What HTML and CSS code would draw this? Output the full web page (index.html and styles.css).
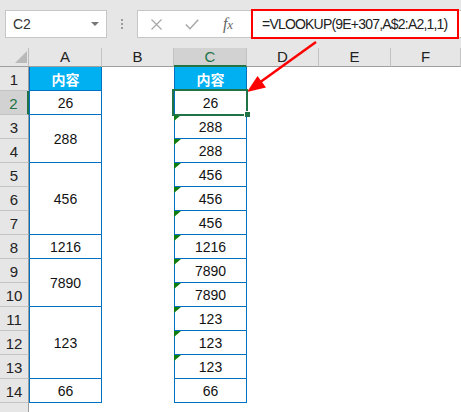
FILE: index.html
```html
<!DOCTYPE html>
<html lang="zh-CN">
<head>
    <title>VLOOKUP</title>
    <meta charset="utf-8"/>
    <link rel="stylesheet" href="styles.css">
</head>
<body>
    <div class="formula-bar">
        <div class="name-box"><span>C2</span><i class="caret"></i></div>
        <div class="grip"><i></i><i></i><i></i></div>
        <div class="formula-box">
            <span class="fb-btn">
                <svg width="11" height="11" viewBox="0 0 11 11"><path d="M0.5 0.5L10.5 10.5M10.5 0.5L0.5 10.5" stroke="#a6a6a6" stroke-width="1.2" fill="none"/></svg>
            </span>
            <span class="fb-btn">
                <svg width="14" height="11" viewBox="0 0 14 11"><path d="M0.8 5.5L5 9.8L13.2 0.8" stroke="#a6a6a6" stroke-width="1.4" fill="none"/></svg>
            </span>
            <span class="fb-btn fx">f<span>x</span></span>
            <div class="formula">=VLOOKUP(9E+307,A$2:A2,1,1)</div>
        </div>
    </div>

    <div class="sheet">
        <div class="corner"></div>
        <div class="col-head">A</div>
        <div class="col-head">B</div>
        <div class="col-head active">C</div>
        <div class="col-head">D</div>
        <div class="col-head">E</div>
        <div class="col-head">F</div>

        <div class="row-head">1</div>
        <div class="cell col-a title">内容</div>
        <div class="cell col-c title">内容</div>

        <div class="row-head active">2</div>
        <div class="cell col-a">26</div>
        <div class="cell col-c selected">26</div>

        <div class="row-head">3</div>
        <div class="cell col-a span2">288</div>
        <div class="cell col-c flag">288</div>

        <div class="row-head">4</div>
        <div class="cell col-c flag">288</div>

        <div class="row-head">5</div>
        <div class="cell col-a span3">456</div>
        <div class="cell col-c flag">456</div>

        <div class="row-head">6</div>
        <div class="cell col-c flag">456</div>

        <div class="row-head">7</div>
        <div class="cell col-c flag">456</div>

        <div class="row-head">8</div>
        <div class="cell col-a">1216</div>
        <div class="cell col-c flag">1216</div>

        <div class="row-head">9</div>
        <div class="cell col-a span2">7890</div>
        <div class="cell col-c flag">7890</div>

        <div class="row-head">10</div>
        <div class="cell col-c flag">7890</div>

        <div class="row-head">11</div>
        <div class="cell col-a span3">123</div>
        <div class="cell col-c flag">123</div>

        <div class="row-head">12</div>
        <div class="cell col-c flag">123</div>

        <div class="row-head">13</div>
        <div class="cell col-c flag">123</div>

        <div class="row-head">14</div>
        <div class="cell col-a">66</div>
        <div class="cell col-c">66</div>

        <div class="row-head"></div>
    </div>

    <!-- callout from the formula to the selected cell -->
    <svg class="callout" width="461" height="412" viewBox="0 0 461 412">
        <line x1="316" y1="42" x2="259" y2="83" stroke="#ff0000" stroke-width="2.5"/>
        <polygon points="247,92 266,87.5 257.5,76" fill="#ff0000"/>
    </svg>
</body>
</html>
```

FILE: styles.css
```css
body {
    margin: 0;
    width: 461px;
    height: 412px;
    overflow: hidden;
    position: relative;
    background-color: #fff;
    font-family: "Liberation Sans", "Noto Sans CJK SC", sans-serif;
}

/* formula bar */
.formula-bar {
    height: 48px;
    box-sizing: border-box;
    padding-top: 10px;
    background-color: #e6e6e6;
    display: flex;
    align-items: flex-start;
}
.name-box {
    margin-left: 5px;
    width: 102px;
    height: 28px;
    box-sizing: border-box;
    background-color: #fff;
    border: 1px solid #c6c6c6;
    padding: 0 7px 0 7px;
    display: flex;
    align-items: center;
    justify-content: space-between;
    font-size: 14px;
    color: #333;
}
.caret {
    border-left: 4px solid transparent;
    border-right: 4px solid transparent;
    border-top: 4px solid #777;
}
.grip {
    width: 30px;
    padding-top: 9px;
    display: flex;
    flex-direction: column;
    align-items: center;
    gap: 2px;
}
.grip i {
    width: 2px;
    height: 2px;
    background-color: #9b9b9b;
}
.formula-box {
    flex: 1;
    height: 28px;
    box-sizing: border-box;
    background-color: #fff;
    border: 1px solid #c6c6c6;
    border-right: none;
    display: flex;
    align-items: center;
}
.fb-btn {
    width: 36px;
    display: flex;
    justify-content: center;
    align-items: center;
}
.fx {
    font-family: "Liberation Serif", serif;
    font-style: italic;
    font-size: 16px;
    color: #666;
}
.fx span {
    font-size: 13px;
    position: relative;
    top: 1px;
}
.formula {
    margin-left: 5px;
    width: 208px;
    height: 30px;
    box-sizing: border-box;
    border: 2px solid #ff0000;
    padding-left: 9px;
    line-height: 26px;
    font-size: 14px;
    letter-spacing: -0.8px;
    color: #222;
    white-space: nowrap;
}

/* worksheet */
.sheet {
    display: grid;
    grid-template-columns: 29px 73px 72px 73px 72px 72px 70px;
    grid-template-rows: 19px;
    grid-auto-rows: 24px;
    grid-auto-flow: row dense;
    font-size: 14px;
}
.sheet > div {
    box-sizing: border-box;
}
.corner {
    background-color: #e6e6e6;
    border-right: 1px solid #bdbdbd;
    border-bottom: 1px solid #9e9e9e;
    position: relative;
}
.corner::after {
    content: "";
    position: absolute;
    right: 1px;
    bottom: 3px;
    border-left: 12px solid transparent;
    border-bottom: 12px solid #b9b9b9;
}
.col-head {
    background-color: #e6e6e6;
    border-right: 1px solid #c3c3c3;
    border-bottom: 1px solid #9e9e9e;
    display: flex;
    justify-content: center;
    align-items: flex-end;
    padding-bottom: 1px;
    font-size: 15px;
    color: #222;
}
.col-head.active {
    background-color: #d2d2d2;
    color: #217346;
    border-bottom: 2px solid #217346;
    padding-bottom: 0;
}
.row-head {
    grid-column: 1;
    background-color: #e6e6e6;
    border-right: 1px solid #9e9e9e;
    border-bottom: 1px solid #c3c3c3;
    display: flex;
    justify-content: center;
    align-items: flex-end;
    padding-bottom: 2px;
    font-size: 15px;
    color: #222;
}
.row-head.active {
    background-color: #d2d2d2;
    color: #217346;
    border-right: 2px solid #217346;
}

.cell {
    display: flex;
    align-items: center;
    justify-content: center;
    color: #111;
    border: 1px solid #0070c0;
    border-top: none;
}
.col-a {
    grid-column: 2;
}
.col-c {
    grid-column: 4;
}
.span2 {
    grid-row: span 2;
}
.span3 {
    grid-row: span 3;
}
.title {
    background-color: #00b0f0;
    color: #fff;
    font-weight: bold;
    font-family: "Noto Sans CJK SC", sans-serif;
    font-size: 14px;
}

/* error indicator on numbers stored as text */
.flag {
    position: relative;
}
.flag::before {
    content: "";
    position: absolute;
    left: -1px;
    top: 0;
    border-top: 6px solid #107c10;
    border-right: 7px solid transparent;
}

/* active cell outline and fill handle */
.selected {
    position: relative;
}
.selected::after {
    content: "";
    position: absolute;
    left: -3px;
    top: -2px;
    right: -2px;
    bottom: -2px;
    border: 2px solid #217346;
    z-index: 2;
}
.selected::before {
    content: "";
    position: absolute;
    left: 70px;
    top: 21px;
    width: 5px;
    height: 5px;
    background-color: #217346;
    box-shadow: -1px -1px 0 #fff;
    z-index: 3;
}

.callout {
    position: absolute;
    left: 0;
    top: 0;
    pointer-events: none;
}
```
